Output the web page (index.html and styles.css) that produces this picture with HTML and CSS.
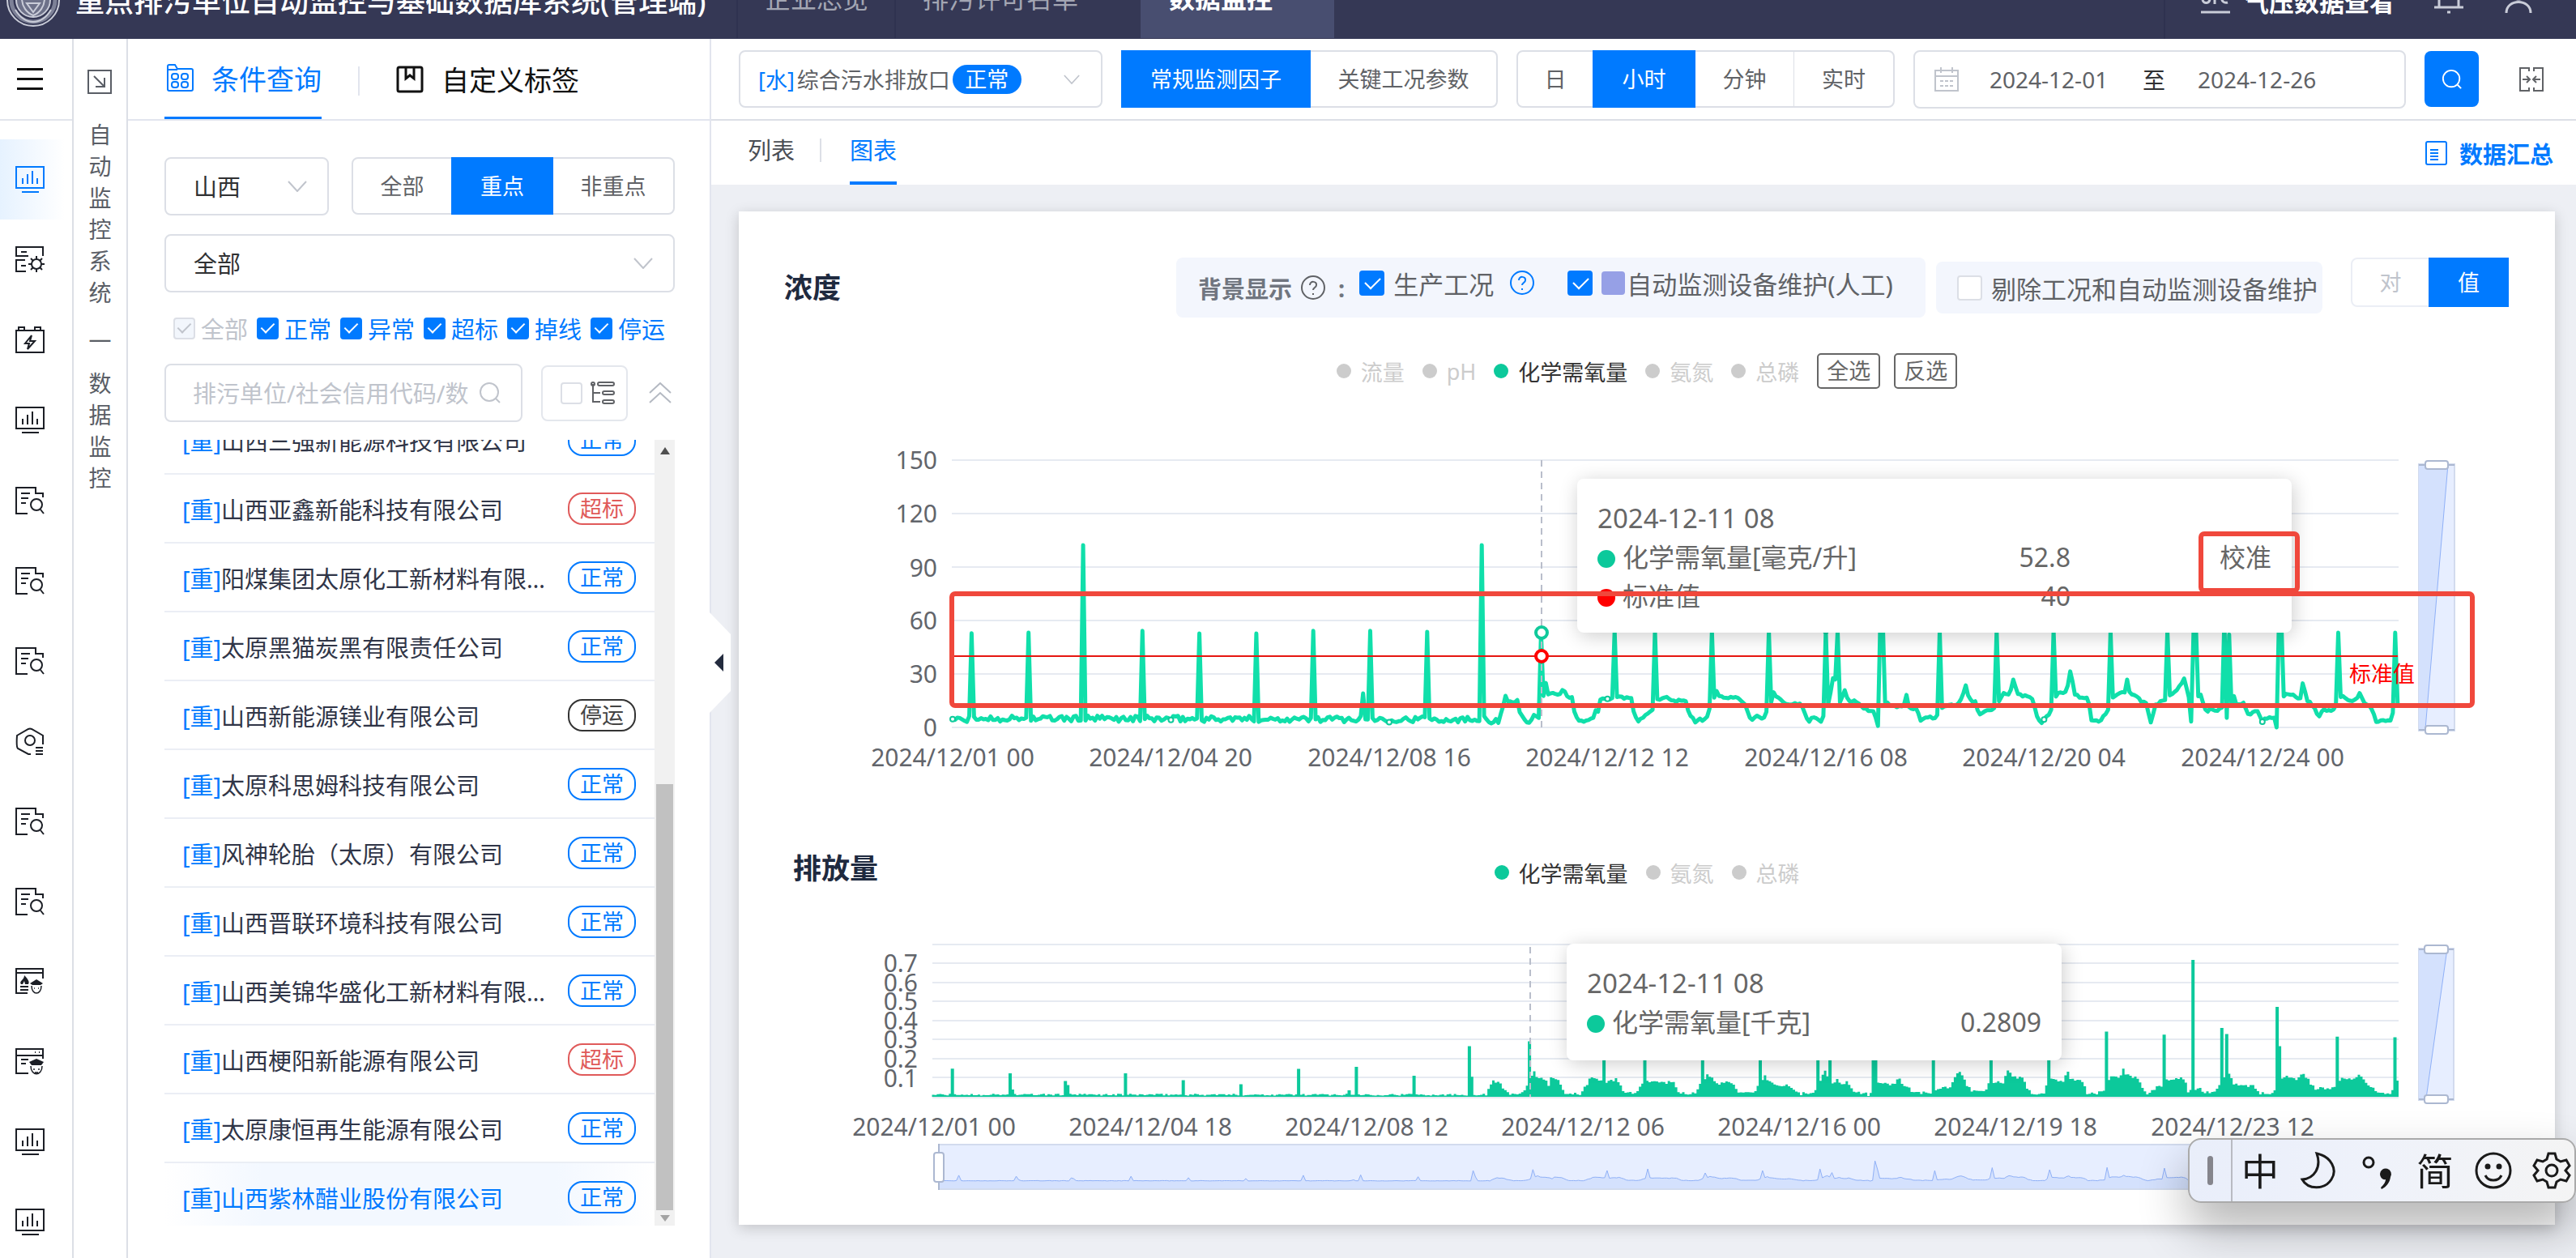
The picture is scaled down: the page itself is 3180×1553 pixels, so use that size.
FILE: index.html
```html
<!DOCTYPE html>
<html lang="zh-CN">
<head>
<meta charset="utf-8">
<title>重点排污单位自动监控与基础数据库系统</title>
<link rel="stylesheet" href="styles.css">
</head>
<body>
<svg class="defs" aria-hidden="true">
  <symbol id="i-chart" viewBox="0 0 36 34"><path d="M1 1h34v26H1zM8 32h21M9 15v7M15 10v12M21 6v16M27 15v7"/></symbol>
  <symbol id="i-gearlist" viewBox="0 0 36 34"><path d="M16 12H1V1h33v11M7 7h7M12 17H1v14h12M7 24h6"/><circle cx="26" cy="22" r="6"/><path d="M26 12v4M26 28v4M16 22h4M32 22h4M19 15l3 3M30 26l3 3M33 15l-3 3M22 26l-3 3"/></symbol>
  <symbol id="i-battery" viewBox="0 0 36 34"><path d="M1 5h34v27H1zM4 5V1h7v4M24 5V1h7v4M20 11l-8 10h5l-2 7 9-10h-6z"/></symbol>
  <symbol id="i-doc" viewBox="0 0 36 34"><path d="M15 33H1V1h24v7h9v5M7 8h11M7 14h9M7 20h6M31 28l4 5"/><circle cx="26" cy="22" r="7"/></symbol>
  <symbol id="i-hex" viewBox="0 0 36 34"><path d="M34 21V10L20 2q-2-1-4 0L2 10q-1 14 1 16l13 7h3M25 25h9M25 29h9M25 33h9"/><circle cx="18" cy="16" r="6"/></symbol>
  <symbol id="i-fire" viewBox="0 0 36 34"><path d="M15 31H1V1h33v12M1 6h33M6 23h10M6 27h10"/><path class="fill" d="M11 9c4 4 7 8 5 11h-4l-1-4-2 4H7c-3-4 4-5 4-11zM18 19l8-5 8 5-3 2H21z"/><path class="thin" d="M20 22c0 12 12 12 12 0M23 25h1M28 25h1"/></symbol>
  <symbol id="i-police" viewBox="0 0 36 34"><path d="M16 31H1V1h33v12M1 9h33M24 5h1M29 5h1M7 14h9M7 19h6"/><path class="fill" d="M17 17l9-4 9 4-3 4H20z"/><path class="thin" d="M19 22c0 13 14 13 14 0M22 26h2M28 26h2M24 30h4"/></symbol>
  <symbol id="i-down" viewBox="0 0 24 14"><path d="M1 1l11 12L23 1"/></symbol>
  <symbol id="i-search" viewBox="0 0 28 28"><circle cx="13" cy="13" r="11"/><path d="M21 21l5 5"/></symbol>
  <symbol id="i-help" viewBox="0 0 32 32"><circle cx="16" cy="16" r="14"/><path d="M12 13c0-6 9-5 8 0 0 3-4 3-4 6M16 23v2"/></symbol>
</svg>

<header class="topbar">
  <div class="topbar-row">
    <svg class="seal" viewBox="0 0 68 68" aria-hidden="true"><circle cx="34" cy="34" r="32"/><circle cx="34" cy="34" r="27" class="seal-ring"/><circle cx="34" cy="34" r="21" class="seal-core"/><path d="M20 32h28c0 10-6 18-14 21-8-3-14-11-14-21zM26 38h16l-8 11zM12 46c6 10 14 15 22 15s16-5 22-15"/></svg>
    <h1 class="brand">重点排污单位自动监控与基础数据库系统(管理端)</h1>
    <nav class="topnav">
      <a href="#" class="topnav-item overview">企业总览</a>
      <a href="#" class="topnav-item permit">排污许可名单</a>
      <a href="#" class="topnav-item active">数据监控</a>
    </nav>
    <div class="top-tools">
      <svg class="top-icon" viewBox="0 0 38 36" aria-hidden="true"><path d="M1 33h36M12 8v8c0 7-8 7-9 2M18 8v15M34 10c-10-4-10 14 0 11"/></svg>
      <a href="#" class="pressure">气压数据查看</a>
      <svg class="top-icon" viewBox="0 0 38 36" aria-hidden="true"><path d="M1 27h36M7 27V10c0-12 24-12 24 0v17M17 33h4"/></svg>
      <svg class="top-icon user" viewBox="0 0 34 36" aria-hidden="true"><circle cx="17" cy="9" r="8"/><path d="M2 34c0-18 30-18 30 0"/></svg>
    </div>
  </div>
</header>

<div class="app">
  <nav class="rail">
    <button class="menu" aria-label="菜单"><span></span><span></span><span></span></button>
    <ul class="rail-list">
      <li class="active"><svg><use href="#i-chart"/></svg></li>
      <li><svg><use href="#i-gearlist"/></svg></li>
      <li><svg><use href="#i-battery"/></svg></li>
      <li><svg><use href="#i-chart"/></svg></li>
      <li><svg><use href="#i-doc"/></svg></li>
      <li><svg><use href="#i-doc"/></svg></li>
      <li><svg><use href="#i-doc"/></svg></li>
      <li><svg><use href="#i-hex"/></svg></li>
      <li><svg><use href="#i-doc"/></svg></li>
      <li><svg><use href="#i-doc"/></svg></li>
      <li><svg><use href="#i-fire"/></svg></li>
      <li><svg><use href="#i-police"/></svg></li>
      <li><svg><use href="#i-chart"/></svg></li>
      <li><svg><use href="#i-chart"/></svg></li>
    </ul>
  </nav>

  <aside class="crumb">
    <svg class="crumb-icon" viewBox="0 0 30 30" aria-hidden="true"><path d="M1 1h28v28H1zM8 8l13 13M21 10v11H10"/></svg>
    <div class="crumb-text">自<br>动<br>监<br>控<br>系<br>统</div>
    <div class="crumb-dash">—</div>
    <div class="crumb-text">数<br>据<br>监<br>控</div>
  </aside>

  <section class="side">
    <div class="side-tabs">
      <a href="#" class="side-tab active"><svg viewBox="0 0 34 34"><path d="M2 7V3q0-2 2-2h7l3 5h17q2 0 2 2v23q0 2-2 2H4q-2 0-2-2V7h12"/><rect x="7" y="12" width="8" height="7" rx="3"/><rect x="19" y="12" width="8" height="7" rx="3"/><rect x="7" y="22" width="8" height="7" rx="3"/><rect x="19" y="22" width="8" height="7" rx="3"/></svg>条件查询</a>
      <a href="#" class="side-tab"><svg viewBox="0 0 34 34"><rect x="2" y="2" width="30" height="30" rx="2"/><path d="M12 2v14l5-4 5 4V2"/></svg>自定义标签</a>
    </div>
    <div class="side-body">
      <div class="filter-row">
        <div class="select province"><select aria-label="省份"><option>山西</option></select><svg><use href="#i-down"/></svg></div>
        <div class="seg grow"><button class="s-all">全部</button><button class="s-key on">重点</button><button class="s-non">非重点</button></div>
      </div>
      <div class="select"><select aria-label="地区"><option>全部</option></select><svg><use href="#i-down"/></svg></div>
      <div class="checks">
        <label class="off"><input type="checkbox" checked disabled>全部</label>
        <label><input type="checkbox" checked>正常</label>
        <label><input type="checkbox" checked>异常</label>
        <label><input type="checkbox" checked>超标</label>
        <label><input type="checkbox" checked>掉线</label>
        <label><input type="checkbox" checked>停运</label>
      </div>
      <div class="search-row">
        <div class="searchbox"><input type="text" aria-label="搜索" placeholder="排污单位/社会信用代码/数"><svg><use href="#i-search"/></svg></div>
        <label class="treebox"><input type="checkbox" aria-label="树形"><svg viewBox="0 0 30 28"><path d="M3 3v22h9M3 14h9"/><circle cx="3" cy="3" r="2"/><rect x="9" y="1" width="20" height="4" rx="2"/><rect x="15" y="12" width="14" height="4" rx="2"/><rect x="15" y="23" width="14" height="4" rx="2"/></svg></label>
        <svg class="fold" viewBox="0 0 28 26"><path d="M1 13L14 1l13 12M1 25l13-12 13 12"/></svg>
      </div>
      <div class="list-wrap">
        <div class="list-view">
          <ul class="list">
            <li><span class="name"><b>[重]</b>山西三强新能源科技有限公司</span><span class="tag">正常</span></li>
            <li><span class="name"><b>[重]</b>山西亚鑫新能科技有限公司</span><span class="tag bad">超标</span></li>
            <li><span class="name"><b>[重]</b>阳煤集团太原化工新材料有限公司</span><span class="tag">正常</span></li>
            <li><span class="name"><b>[重]</b>太原黑猫炭黑有限责任公司</span><span class="tag">正常</span></li>
            <li><span class="name"><b>[重]</b>山西新能源镁业有限公司</span><span class="tag stop">停运</span></li>
            <li><span class="name"><b>[重]</b>太原科思姆科技有限公司</span><span class="tag">正常</span></li>
            <li><span class="name"><b>[重]</b>风神轮胎（太原）有限公司</span><span class="tag">正常</span></li>
            <li><span class="name"><b>[重]</b>山西晋联环境科技有限公司</span><span class="tag">正常</span></li>
            <li><span class="name"><b>[重]</b>山西美锦华盛化工新材料有限公司</span><span class="tag">正常</span></li>
            <li><span class="name"><b>[重]</b>山西梗阳新能源有限公司</span><span class="tag bad">超标</span></li>
            <li><span class="name"><b>[重]</b>太原康恒再生能源有限公司</span><span class="tag">正常</span></li>
            <li class="current"><span class="name"><b>[重]</b>山西紫林醋业股份有限公司</span><span class="tag">正常</span></li>
          </ul>
        </div>
        <div class="scroll"><i class="up"></i><i class="thumb"></i><i class="dn"></i></div>
      </div>
    </div>
    <button class="handle" aria-label="收起"><svg viewBox="0 0 28 124"><path class="handle-bg" d="M0 0l26 27v70L0 124z"/><path class="handle-arrow" d="M17 51v22L6 62z"/></svg></button>
  </section>

  <main class="main">
    <div class="toolbar">
      <button class="outlet" role="combobox" aria-expanded="false"><span class="blue">[水]</span><span class="outlet-name">综合污水排放口</span><span class="pill">正常</span><svg><use href="#i-down"/></svg></button>
      <div class="seg"><button class="w-a on">常规监测因子</button><button class="w-b">关键工况参数</button></div>
      <div class="seg"><button class="w-c">日</button><button class="w-d on">小时</button><button class="w-e line">分钟</button><button class="w-f">实时</button></div>
      <div class="range">
        <svg viewBox="0 0 30 30"><path d="M1 4h28v25H1zM1 11h28M8 0v7M22 0v7M7 17h4M13 17h4M19 17h4M7 23h4M13 23h4M19 23h4"/></svg>
        <input class="from" type="text" aria-label="开始日期" value="2024-12-01"><span>至</span><input class="to" type="text" aria-label="结束日期" value="2024-12-26">
      </div>
      <button class="go" aria-label="查询"><svg><use href="#i-search"/></svg></button>
      <svg class="shrink" viewBox="0 0 30 30"><path d="M12 5V1H1v28h11v-4M18 5V1h11v28H18v-4M4 15h8M9 11l4 4-4 4M26 15h-8M21 11l-4 4 4 4"/></svg>
    </div>
    <div class="subtabs">
      <a href="#" class="subtab">列表</a><i class="bar"></i><a href="#" class="subtab active">图表</a>
      <a href="#" class="summary"><svg viewBox="0 0 28 30"><rect x="1" y="1" width="25" height="28" rx="2"/><path d="M6 11h10M6 15h10M6 19h10M6 23h10"/></svg>数据汇总</a>
    </div>

    <div class="card">
      <div class="card-head">
        <h2>浓度</h2>
        <div class="opts">
          <strong>背景显示</strong><svg class="help"><use href="#i-help"/></svg><strong class="colon">:</strong>
          <label class="o-a"><input type="checkbox" checked>生产工况</label><svg class="help blue"><use href="#i-help"/></svg>
          <label class="o-b"><input type="checkbox" checked><i class="swatch"></i>自动监测设备维护(人工)</label>
        </div>
        <div class="opts cut"><label><input type="checkbox">剔除工况和自动监测设备维护</label></div>
        <div class="seg small"><button class="v-a">对</button><button class="v-b on">值</button></div>
      </div>

      <div class="legend">
        <span class="lg">流量</span><span class="lg">pH</span><span class="lg on">化学需氧量</span><span class="lg">氨氮</span><span class="lg">总磷</span>
        <button>全选</button><button>反选</button>
      </div>

      <div class="plot">
        <svg class="chart" viewBox="0 0 2242 490">
          <path class="grid" d="M263 88H2049M263 154H2049M263 220H2049M263 286H2049M263 352H2049M263 418H2049"/>
          <g class="ylab"><text x="245" y="99">150</text><text x="245" y="165">120</text><text x="245" y="232">90</text><text x="245" y="297">60</text><text x="245" y="363">30</text><text x="245" y="429">0</text></g>
          <g class="xlab"><text x="264" y="466">2024/12/01 00</text><text x="533" y="466">2024/12/04 20</text><text x="803" y="466">2024/12/08 16</text><text x="1072" y="466">2024/12/12 12</text><text x="1342" y="466">2024/12/16 08</text><text x="1611" y="466">2024/12/20 04</text><text x="1881" y="466">2024/12/24 00</text></g>
          <path class="series" id="cod-line"/>
          <g id="cod-dots" class="dots"></g>
          <path class="limit" d="M263 330H2048"/>
          <text class="limit-text" x="1988" y="362">标准值</text>
          <path class="cross" d="M991 88V418"/>
          <circle class="pt" cx="991" cy="301" r="7"/><circle class="pt red" cx="991" cy="330" r="7"/>
          <g class="zoomer"><path class="zb" d="M2074 93h44v329h-44z"/><path class="zf" d="M2074 93h36l-28 327h-8z"/><path class="zl" d="M2110 93l-28 327"/><path class="zh" d="M2074 94h44M2074 421h44"/><rect x="2082" y="89" width="28" height="10" rx="3"/><rect x="2082" y="416" width="28" height="10" rx="3"/></g>
        </svg>
        <div class="tip tip-a">
          <p>2024-12-11 08</p>
          <table><tr><td><i class="dot"></i>化学需氧量[毫克/升]</td><td class="num">52.8</td><td class="state">校准</td></tr>
          <tr><td><i class="dot red"></i>标准值</td><td class="num">40</td><td></td></tr></table>
        </div>
        <div class="mark mark-line"></div>
        <div class="mark mark-state"></div>
      </div>

      <div class="card-head second">
        <h2>排放量</h2>
        <div class="legend"><span class="lg on">化学需氧量</span><span class="lg">氨氮</span><span class="lg">总磷</span></div>
      </div>
      <div class="plot">
        <svg class="chart" viewBox="0 0 2242 380">
          <path class="grid" d="M239 65H2049M239 88H2049M239 112H2049M239 135H2049M239 159H2049M239 182H2049M239 206H2049M239 229H2049M239 254H2049"/>
          <g class="ylab"><text x="221" y="99">0.7</text><text x="221" y="123">0.6</text><text x="221" y="146">0.5</text><text x="221" y="170">0.4</text><text x="221" y="193">0.3</text><text x="221" y="217">0.2</text><text x="221" y="241">0.1</text></g>
          <g class="xlab"><text x="241" y="301">2024/12/01 00</text><text x="508" y="301">2024/12/04 18</text><text x="775" y="301">2024/12/08 12</text><text x="1042" y="301">2024/12/12 06</text><text x="1309" y="301">2024/12/16 00</text><text x="1576" y="301">2024/12/19 18</text><text x="1844" y="301">2024/12/23 12</text></g>
          <path class="bars" id="amount-bars"/>
          <path class="cross" d="M977 68V253"/>
          <g class="zoomer"><path class="zb" d="M247 312h1802v55H247z"/><path class="zf" id="mini-fill"/><path class="zl" id="mini-line"/><path class="zh" d="M247 311v57"/><rect x="241" y="322" width="12" height="36" rx="3"/></g>
          <g class="zoomer"><path class="zb" d="M2074 70h43v187h-43z"/><path class="zf" d="M2074 70h35l-26 185h-9z"/><path class="zl" d="M2109 70l-26 185"/><path class="zh" d="M2074 71h43M2074 256h43"/><rect x="2081" y="66" width="29" height="10" rx="3"/><rect x="2081" y="251" width="29" height="10" rx="3"/></g>
        </svg>
        <div class="tip tip-b">
          <p>2024-12-11 08</p>
          <table><tr><td><i class="dot"></i>化学需氧量[千克]</td><td class="num">0.2809</td></tr></table>
        </div>
      </div>
    </div>
  </main>
</div>

<div class="ime">
  <span class="grip"></span>
  <span class="glyph">中</span>
  <svg viewBox="0 0 48 48"><path d="M22 3c18 4 26 20 18 32-8 13-29 13-36 0C19 34 28 20 22 3z"/></svg>
  <svg viewBox="0 0 48 48"><circle cx="14" cy="14" r="6"/><path class="fill" d="M28 28a7 7 0 1 1 13 4c-1 7-5 12-11 15l-1-2c4-4 6-7 6-10-4 1-7-3-7-7z"/></svg>
  <span class="glyph">简</span>
  <svg viewBox="0 0 48 48"><circle cx="24" cy="24" r="21"/><circle class="solid" cx="17" cy="19" r="2"/><circle class="solid" cx="31" cy="19" r="2"/><path d="M14 30c4 8 16 8 20 0"/></svg>
  <svg viewBox="0 0 48 48"><circle cx="24" cy="24" r="7"/><path d="M20 3h8l2 7 5 3 7-2 4 7-5 6 5 6-4 7-7-2-5 3-2 7h-8l-2-7-5-3-7 2-4-7 5-6-5-6 4-7 7 2 5-3z"/></svg>
</div>
<script src="chart.js"></script>
</body>
</html>
```
FILE: styles.css
```css
* { box-sizing: border-box; }
body {
  margin: 0;
  height: 100vh;
  display: flex;
  flex-direction: column;
  overflow: hidden;
  background: #edeff4;
  color: #606266;
  font-family: "Noto Sans", "Noto Sans CJK SC", sans-serif;
  font-size: 27px;
}
ul { list-style: none; margin: 0; padding: 0; }
h1, h2, p { margin: 0; }
a { color: inherit; text-decoration: none; }
button, input, select { font: inherit; color: inherit; background: none; border: 0; padding: 0; margin: 0; outline: 0; }
svg { fill: none; stroke: currentColor; stroke-width: 2; flex: none; }
.solid { fill: currentColor; }
.fill { fill: currentColor; stroke: none; }
.thin { stroke-width: 1.5; }
.defs { display: none; }
.blue { color: #007aff; }

/* top bar */
.topbar { height: 48px; overflow: hidden; background: #353855; color: #fff; flex: none; }
.topbar-row { height: 96px; margin-top: -48px; display: flex; align-items: center; }
.seal { width: 68px; height: 68px; margin: 0 18px 0 7px; color: #c9ccd8; }
.seal-ring { stroke-width: 5; stroke: #7d8197; }
.seal-core { fill: #6d7189; }
.brand { width: 816px; font-size: 36px; font-weight: 500; line-height: 40px; padding-top: 4px; white-space: nowrap; }
.topnav { display: flex; align-self: stretch; }
.topnav-item { font-size: 32px; line-height: 92px; padding: 0 33px; color: #a3a6b3; border-left: 2px solid #2f3250; height: 95px; white-space: nowrap; }
.topnav-item.overview { width: 195px; }
.topnav-item.permit { width: 304px; }
.topnav-item.active { width: 239px; background: #484e70; color: #fff; font-weight: 700; border-color: #484e70; }
.top-tools { margin-left: auto; align-self: stretch; display: flex; align-items: center; border-left: 2px solid #2f3250; padding: 0 54px 0 43px; }
.top-icon { width: 38px; height: 36px; color: #c9ccd8; stroke-width: 3; }
.top-icon.user { width: 34px; margin-left: 50px; }
.pressure { font-size: 31px; font-weight: 700; margin: 0 48px 0 16px; }

/* shell */
.app { flex: 1; display: flex; min-height: 0; }
.rail { width: 91px; background: #fff; border-right: 2px solid #dcdfe6; overflow: hidden; flex: none; color: #1c1f26; }
.menu { display: flex; flex-direction: column; justify-content: center; gap: 9px; width: 100%; height: 101px; padding-left: 21px; border-bottom: 2px solid #e2e5ec; }
.menu span { width: 32px; height: 3px; background: #111; }
.rail-list { padding-top: 23px; }
.rail-list li { height: 99px; padding-left: 19px; display: flex; align-items: center; }
.rail-list li.active { background: linear-gradient(90deg, #e6f2ff, #fff 90%); color: #007aff; }
.rail-list svg { width: 36px; height: 34px; }
.crumb { width: 67px; background: #fff; border-right: 2px solid #dcdfe6; flex: none; padding-top: 38px; text-align: center; font-size: 28px; line-height: 39px; color: #5a5e66; }
.crumb-icon { width: 30px; height: 30px; display: block; margin: 0 auto 31px 17px; }
.crumb-dash { margin: 17px 0; }

/* side panel */
.side { width: 720px; background: #fff; border-right: 2px solid #e2e5ee; flex: none; display: flex; flex-direction: column; position: relative; }
.side-tabs { height: 101px; flex: none; border-bottom: 2px solid #e2e5ee; padding-left: 45px; display: flex; font-size: 34px; color: #111; }
.side-tab { display: flex; align-items: center; height: 99px; }
.side-tab svg { width: 34px; height: 34px; margin: 0 22px 0 0; stroke-width: 3; }
.side-tab.active { color: #007aff; border-bottom: 3px solid #007aff; margin-right: 92px; position: relative; width: 194px; }
.side-tab.active svg { stroke-width: 2; margin-left: 2px; }
.side-tab.active::after { content: ""; position: absolute; left: 239px; top: 34px; width: 2px; height: 36px; background: #e2e5ee; }
.side-body { flex: 1; min-height: 0; padding: 45px 43px 40px 45px; display: flex; flex-direction: column; }
.filter-row { display: flex; gap: 28px; margin-bottom: 23px; }
.select { position: relative; height: 72px; flex: none; }
.select.province { width: 203px; }
.select select { appearance: none; width: 100%; height: 72px; border: 2px solid #dcdfe6; border-radius: 8px; padding-left: 34px; font-size: 29px; color: #303133; }
.select svg { position: absolute; right: 27px; top: 29px; width: 24px; height: 14px; color: #c0c4cc; }
.seg { display: flex; border: 2px solid #dcdfe6; border-radius: 8px; height: 71px; flex: none; }
.seg.grow { flex: 1; }
.seg button { text-align: center; height: 67px; line-height: 67px; }
.seg button.on { background: #007aff; color: #fff; height: 71px; margin: -2px 0; line-height: 71px; }
.seg button.line { border-right: 1px solid #dcdfe6; }
.s-all { width: 121px; } .s-key { width: 126px; } .s-non { flex: 1; }
.checks { height: 88px; flex: none; display: flex; align-items: center; gap: 11px; padding-left: 11px; font-size: 29px; color: #007aff; white-space: nowrap; }
label { display: flex; align-items: center; }
.checks label { gap: 7px; }
.checks label.off { color: #c0c4cc; }
input[type=checkbox] { appearance: none; position: relative; width: 27px; height: 27px; border: 2px solid #dcdfe6; border-radius: 4px; background: #fff; flex: none; }
input[type=checkbox]:checked { background: #007aff; border-color: #007aff; }
input[type=checkbox]:checked::after { content: ""; position: absolute; left: 32%; top: 8%; width: 32%; height: 60%; border: solid #fff; border-width: 0 2px 2px 0; transform: rotate(45deg); }
input[type=checkbox]:disabled { background: #f2f6fc; border-color: #dcdfe6; }
input[type=checkbox]:disabled::after { border-color: #c0c4cc; }
.search-row { display: flex; align-items: center; flex: none; height: 72px; }
.searchbox { width: 442px; height: 72px; border: 2px solid #dcdfe6; border-radius: 8px; display: flex; align-items: center; padding: 0 24px 0 33px; font-size: 29px; }
.searchbox input { flex: 1; min-width: 0; }
.searchbox input::placeholder { color: #c0c4cc; opacity: 1; }
.searchbox svg { width: 28px; height: 28px; color: #c0c4cc; margin-left: 12px; }
.treebox { width: 107px; height: 69px; border: 2px solid #e4e7ed; border-radius: 8px; margin: 0 26px 0 23px; padding-left: 22px; gap: 10px; }
.treebox svg { width: 30px; height: 28px; }
.fold { width: 28px; height: 26px; color: #b4b9c2; }
.list-wrap { flex: 1; min-height: 0; margin-top: 22px; display: flex; }
.list-view { flex: 1; min-width: 0; overflow: hidden; display: flex; flex-direction: column; justify-content: flex-end; }
.list { margin-bottom: -8px; }
.list li { height: 85px; display: flex; align-items: center; justify-content: space-between; padding: 0 23px 0 22px; border-bottom: 2px solid #ebeef5; font-size: 29px; color: #303547; }
.list b { font-weight: 400; color: #007aff; }
.name { width: 460px; overflow: hidden; text-overflow: ellipsis; white-space: nowrap; }
.list li.current { background: linear-gradient(90deg, #fff, #f3f8ff 20%, #f3f8ff 80%, #fff); color: #007aff; }
.tag { width: 84px; height: 40px; border: 2px solid #007aff; border-radius: 18px; color: #007aff; font-size: 27px; line-height: 36px; text-align: center; }
.tag.bad { color: #e05a5a; border-color: #e05a5a; }
.tag.stop { color: #444; border-color: #333; }
.scroll { width: 25px; background: #f1f1f1; display: flex; flex-direction: column; align-items: center; padding: 9px 0 5px; }
.scroll .up, .scroll .dn { border: 6px solid transparent; height: 0; }
.scroll .up { border-bottom: 9px solid #505050; border-top: 0; }
.scroll .dn { border-top: 8px solid #a3a3a3; border-bottom: 0; }
.scroll .thumb { width: 21px; flex: 0 0 55%; margin: auto 0 6px; background: #c1c1c1; }
.handle { position: absolute; left: 100%; top: 708px; width: 28px; height: 124px; z-index: 2; }
.handle svg { width: 28px; height: 124px; stroke: none; display: block; }
.handle-bg { fill: #fff; }
.handle-arrow { fill: #232b3e; }

/* main */
.main { flex: 1; min-width: 0; display: flex; flex-direction: column; }
.toolbar { height: 101px; flex: none; background: #fff; border-bottom: 2px solid #dcdfe6; display: flex; align-items: center; gap: 23px; padding: 0 40px 0 34px; }
.outlet { width: 449px; height: 71px; border: 2px solid #dcdfe6; border-radius: 8px; display: flex; align-items: center; padding: 0 26px 0 22px; white-space: nowrap; }
.outlet-name { margin: 0 3px 0 3px; }
.pill { width: 85px; height: 36px; border-radius: 18px; background: #007aff; color: #fff; line-height: 36px; }
.outlet svg { width: 20px; height: 12px; margin-left: auto; color: #c0c4cc; }
.w-a { width: 234px; } .w-b { width: 229px; } .w-c { width: 92px; } .w-d { width: 127px; } .w-e { width: 122px; } .w-f { width: 122px; }
.seg .w-a.on { margin-left: -2px; }
.range { flex: 1; min-width: 0; height: 72px; border: 2px solid #dcdfe6; border-radius: 8px; display: flex; align-items: center; padding-left: 24px; font-size: 28px; }
.range svg { width: 30px; height: 30px; color: #c0c4cc; margin-right: 38px; }
.range input { min-width: 0; }
.range .from { width: 189px; }
.range .to { flex: 1; margin-left: 40px; }
.range span { color: #303133; }
.go { width: 67px; height: 69px; border-radius: 8px; background: #007aff; color: #fff; }
.go svg { width: 26px; height: 26px; display: block; margin: 0 auto; }
.shrink { width: 30px; height: 30px; margin-left: 27px; }
.subtabs { height: 79px; flex: none; background: #fff; display: flex; align-items: center; padding: 0 28px 0 45px; font-size: 29px; color: #4a4e55; }
.subtab { height: 79px; line-height: 73px; border-bottom: 4px solid transparent; }
.subtab.active { color: #007aff; border-color: #007aff; }
.subtabs .bar { width: 2px; height: 29px; background: #dcdfe6; margin: 0 35px 6px 31px; }
.summary { margin-left: auto; color: #007aff; font-weight: 700; display: flex; align-items: center; gap: 14px; }
.summary svg { width: 28px; height: 30px; }
.card { flex: 1; margin: 33px 26px 41px 34px; background: #fff; box-shadow: 0 4px 16px rgba(0, 0, 0, .18); padding-top: 57px; min-height: 0; }
.card-head { height: 74px; display: flex; align-items: flex-start; padding: 0 57px 0 56px; }
.card h2 { font-size: 35px; font-weight: 700; color: #1f2a3f; line-height: 74px; }
.opts { width: 925px; height: 74px; margin-left: auto; background: #f3f6fd; border-radius: 8px; display: flex; align-items: center; padding-left: 27px; font-size: 31px; white-space: nowrap; overflow: hidden; flex: none; }
.opts strong { font-size: 29px; color: #70757f; }
.opts input[type=checkbox] { width: 31px; height: 31px; margin-right: 11px; }
.help { width: 32px; height: 32px; margin-left: 10px; }
.help.blue { margin-left: 19px; }
.colon { margin: 0 18px 0 15px; }
.opts .o-a, .opts .o-b, .help.blue { margin-bottom: 12px; }
.o-b { margin-left: 40px; }
.swatch { width: 29px; height: 29px; border-radius: 4px; background: #96a0e6; margin-right: 2px; }
.opts.cut { width: 477px; height: 64px; margin: 5px 35px 0 13px; padding-left: 26px; }
.seg.small { height: 61px; border-color: #ebeef5; }
.seg.small button { height: 57px; line-height: 57px; color: #c0c4cc; }
.seg.small .v-b.on { height: 61px; line-height: 61px; color: #fff; margin-right: -2px; }
.v-a { width: 94px; } .v-b { width: 99px; }
.legend { display: flex; justify-content: center; align-items: center; height: 44px; color: #ccc; }
.card > .legend { margin-top: 44px; }
.lg { display: flex; align-items: center; margin-right: 22px; }
.lg::before { content: ""; width: 18px; height: 18px; border-radius: 9px; background: #ccc; margin-right: 12px; }
.lg.on { color: #333; }
.lg.on::before { background: #0cc99b; }
.legend button { width: 78px; height: 44px; line-height: 40px; border: 2px solid #666; border-radius: 5px; color: #666; }
.legend button + button { margin-left: 17px; }
.second { display: grid; grid-template-columns: 1fr auto 1fr; height: 131px; padding: 79px 67px 0; align-items: start; }
.second h2 { line-height: 46px; }
.second .legend { padding-top: 12px; }
.second .lg:last-child { margin-right: 0; }

/* charts */
.plot { position: relative; }
.chart { display: block; width: 100%; height: auto; }
.grid { stroke: #e6eaf1; }
.ylab text, .xlab text { font-size: 30px; fill: #62656b; stroke: none; }
.ylab text { text-anchor: end; }
.xlab text { text-anchor: middle; }
.series { stroke: #10dfaa; stroke-width: 5; stroke-linejoin: round; }
.dots circle { fill: #fff; stroke: #10c99b; }
.limit { stroke: #e61610; }
.limit-text { font-size: 27px; fill: #f00; stroke: none; }
.cross { stroke: #b9becb; stroke-dasharray: 8 6; }
.pt { fill: #fff; stroke: #10c99b; stroke-width: 4; }
.pt.red { stroke: #f00; }
.bars { fill: #0cc99b; stroke: none; }
.zb { fill: #e7eeff; stroke: #d2dbee; }
.zf { fill: #d4e1fd; stroke: none; }
.zl { stroke: #8fb0f7; stroke-width: 1; }
.zh { stroke: #acb8d1; }
.zoomer rect { fill: #fff; stroke: #acb8d1; }
.tip { position: absolute; background: #fff; border-radius: 8px; box-shadow: 2px 4px 24px rgba(0, 0, 0, .2); padding: 25px; font-size: 32px; line-height: 48px; color: #666; }
.tip p { font-size: 33px; }
.tip table { width: 100%; border-collapse: collapse; }
.tip td { padding: 0; height: 48px; white-space: nowrap; }
.tip-a { left: 1035px; top: 111px; width: 882px; height: 190px; }
.tip-b { left: 1022px; top: 64px; width: 611px; height: 144px; }
.num { text-align: right; }
.state { text-align: right; width: 248px; }
.dot { display: inline-block; width: 22px; height: 22px; border-radius: 11px; background: #0cc99b; margin-right: 9px; vertical-align: -1px; }
.dot.red { background: #f00; }
.mark { position: absolute; border: 6px solid #f0483c; border-radius: 7px; }
.mark-line { left: 260px; top: 250px; width: 1883px; height: 144px; }
.mark-state { left: 1802px; top: 176px; width: 125px; height: 76px; }

/* input method bar */
.ime { position: fixed; right: 0; bottom: 68px; width: 479px; height: 80px; border: 2px solid #aaa; border-radius: 16px; background: linear-gradient(90deg, #e9eefa, #eff2fa 50%, #f4f4f4); box-shadow: 0 30px 60px rgba(0, 0, 0, .3); display: flex; align-items: center; color: #1a1a1a; z-index: 5; }
.grip { flex: none; width: 53px; height: 76px; border-right: 2px solid #b8bac2; margin-right: 10px; display: flex; align-items: center; justify-content: center; }
.grip::before { content: ""; width: 7px; height: 36px; border-radius: 4px; background: #85858c; }
.glyph { flex: none; width: 48px; margin-right: 24px; font-size: 46px; line-height: 76px; text-align: center; }
.ime svg { width: 48px; height: 48px; margin-right: 24px; stroke-width: 3; }
.ime svg:last-child { margin-right: 0; }
```
FILE: chart.js
```js
// Hourly readings: [hour, value] turning points of the base curve, plus short peaks.
const HOURS = 610;

const codBase = [0,5, 4,4, 9,5, 220,4.5, 224,6, 227,3.4, 230,3, 231.8,10.7, 233,17.5, 234.2,14.7, 238,14.7, 239.2,7, 240.5,6.6, 241.3,3, 243.5,3, 244.8,6.6, 247,5, 249,17, 250,24.4, 251,19, 256,19, 257.5,21, 259,17.5, 261,16.3, 262,9, 264,3.9, 267,3.4, 269,5.5, 270,5, 271,9, 272.3,9.4, 273,15.8, 277,16, 280,17, 286.2,16, 287.3,7, 289,3, 291.6,6.6, 294.7,9, 297,15.5, 301.3,17, 303,15, 309,14.7, 310.3,8.2, 313.2,3, 314.7,6, 316,3.2, 318,6, 320,14, 322,20, 323.2,17, 331.4,16.6, 334.2,13, 336.5,3.2, 339,6, 341.7,4.2, 345,14, 346,19, 349,15.5, 351.4,12.6, 357.4,13.6, 360.4,3.4, 363.5,6, 366,3, 369.7,15.5, 370.7,26.9, 371.7,28.5, 374,14, 376,20.4, 377.6,15, 381,14.7, 383.6,10.7, 388.7,8.2, 390,0.2, 393.3,14.7, 395,12, 400.8,11.5, 402,18.8, 403,11.5, 406.4,9.9, 408,3.4, 411,6, 413.6,4.5, 417.5,12.3, 424,13, 426,18.8, 427,23.6, 428.3,15.5, 431,14, 433,6.6, 435.5,9.4, 438.6,9.9, 441.6,16.3, 442.7,18.8, 445.7,19, 447,26.5, 449,18, 454.7,17.5, 457.3,5, 459,3, 460.6,5.8, 462.7,8, 465.5,18.8, 469.4,19.6, 471.2,32.8, 472.7,19, 475.3,17, 478.6,16.3, 480,4.2, 483,3.4, 486.3,7.4, 489.4,18, 494,19.6, 495,26.5, 496.4,18, 499.2,18, 500.5,14.7, 503,14, 505,3.4, 507,13, 510.5,14.7, 513.6,18.8, 516.4,21.7, 519,27, 520.8,19.6, 522,3.4, 525.6,20.7, 527.2,12, 528.7,9, 530.5,11, 532.6,8.7, 535,11.5, 537,5, 540,17, 541.3,12.3, 544,14, 546,7.4, 550,9, 551.6,3.4, 555,5.8, 557,5, 558,0, 561.3,19, 564.7,18.8, 566.5,16, 568,16, 569,25, 571,15, 573.4,12.3, 575.7,5.8, 578,9.9, 582,10, 585.5,18.4, 589,15, 591.7,15.5, 593.2,19.6, 594.5,14, 597.3,12.3, 600,3.4, 606,4.5, 609,14, 610,14];
const codPeaks = {8:52.7, 32:53, 55:102, 80:54, 104:52.6, 128:52.5, 152:54, 173:19, 176:54, 200:53.5, 223:102, 248:52.8, 279:54, 296:54, 320:54, 344:54, 368:54, 373:54, 391:60, 392:60, 416:54, 440:54, 464:54, 488:54, 512:54, 523:54, 524:56, 536:60, 538:52, 559:60, 560:60, 584:53, 608:53};

const amountBase = [0,.007, 229,.007, 230,.008, 231.8,.057, 233,.08, 236.3,.072, 237.5,.027, 240,.01, 245.7,.015, 247,.05, 250,.124, 251.6,.094, 255,.087, 256,.057, 257,.091, 260,.087, 261.3,.042, 263.5,.012, 269.6,.012, 272,.064, 273,.094, 276,.09, 280,.069, 284,.087, 286,.05, 287.8,.015, 292.5,.015, 295,.064, 297.2,.077, 308,.069, 310.2,.019, 317,.012, 319,.057, 322,.109, 324.3,.087, 326.7,.064, 331.4,.076, 333.3,.064, 334.5,.027, 336.8,.012, 341.8,.015, 343.2,.05, 346,.1, 348.4,.072, 351.5,.05, 356.2,.057, 358.6,.02, 361,.012, 366.4,.015, 368,.057, 371,.131, 372,.1, 374.4,.057, 375.8,.087, 378,.064, 380.6,.076, 382.7,.02, 388,.012, 389.8,.003, 392,.064, 400,.061, 401.8,.104, 403,.064, 405.4,.05, 407,.016, 415.3,.016, 417.7,.042, 423.6,.05, 425,.1, 427,.127, 428.6,.087, 430.7,.042, 433,.022, 437.8,.027, 439.2,.072, 445,.072, 447.2,.136, 449,.094, 453.6,.1, 454.8,.042, 457,.012, 462,.015, 463.3,.057, 465,.087, 469.7,.072, 471.8,.13, 473.2,.087, 477.2,.087, 479,.05, 480,.012, 486.7,.019, 490,.11, 493.3,.087, 495,.14, 496.4,.11, 501,.094, 502.8,.05, 505,.015, 507.5,.037, 511,.05, 513,.087, 520.5,.094, 522,.02, 526,.042, 528.8,.02, 533.5,.022, 534.7,.057, 539,.124, 540.6,.064, 545.3,.057, 549.3,.05, 551.2,.015, 557,.01, 560.7,.087, 563,.11, 567.3,.08, 569.4,.124, 571.8,.087, 575,.035, 578.4,.042, 583,.046, 586,.1, 591.4,.087, 593,.11, 595,.087, 598,.042, 602,.015, 606.8,.019, 608.7,.087, 610,.08];
const amountPeaks = {8:.143, 32:.118, 33:.034, 55:.078, 56:.057, 80:.119, 104:.082, 128:.061, 152:.142, 173:.03, 176:.152, 200:.106, 223:.26, 224:.1, 248:.285, 279:.26, 296:.3, 320:.2, 344:.26, 368:.3, 373:.21, 391:.5, 392:.3, 416:.26, 440:.33, 464:.28, 488:.336, 512:.32, 524:.71, 536:.355, 538:.324, 559:.465, 560:.26, 584:.31, 608:.307};

function baseAt(pts, h) {
  for (let i = 2; i < pts.length; i += 2) {
    if (h <= pts[i]) {
      const t = (h - pts[i - 2]) / (pts[i] - pts[i - 2]);
      return pts[i - 1] + t * (pts[i + 1] - pts[i - 1]);
    }
  }
  return pts[pts.length - 1];
}
const jitter = h => {
  const s = Math.sin(h * 12.9898 + 4.1) * 43758.5453;
  return (s - Math.floor(s)) * 2 - 1;
};

function build(base, peaks, early, late) {
  const out = [];
  for (let h = 0; h < HOURS; h++) {
    const noise = jitter(h) * (h < 230 ? early : late);
    out.push(peaks[h] !== undefined ? peaks[h] : Math.max(0, baseAt(base, h) + noise));
  }
  return out;
}

const cod = build(codBase, codPeaks, 1.7, 0.7);
const codX = h => 264 + h * 2.929;
const codY = v => 418 - v * 2.207;
document.getElementById('cod-line').setAttribute('d',
  'M' + cod.map((v, h) => codX(h).toFixed(1) + ' ' + codY(v).toFixed(1)).join('L'));
document.getElementById('cod-dots').innerHTML = [0, 92, 184, 276, 368, 460, 552]
  .map(h => `<circle cx="${codX(h)}" cy="${codY(cod[h])}" r="3"/>`).join('');

const amount = build(amountBase, amountPeaks, 0.005, 0.008);
const barX = h => 240 + h * 2.968;
document.getElementById('amount-bars').setAttribute('d', amount.map((v, h) => {
  const w = amountPeaks[h] ? 4 : 3;
  return `M${(barX(h) - w / 2).toFixed(1)} 253v${(-v * 236.5 - 1).toFixed(1)}h${w}V253z`;
}).join(''));

const mini = amount.map((v, h) => (248 + h * 2.953).toFixed(1) + ' ' + (357 - v * 50).toFixed(1)).join('L');
document.getElementById('mini-line').setAttribute('d', 'M' + mini);
document.getElementById('mini-fill').setAttribute('d', 'M248 366L' + mini + 'V366z');
```
